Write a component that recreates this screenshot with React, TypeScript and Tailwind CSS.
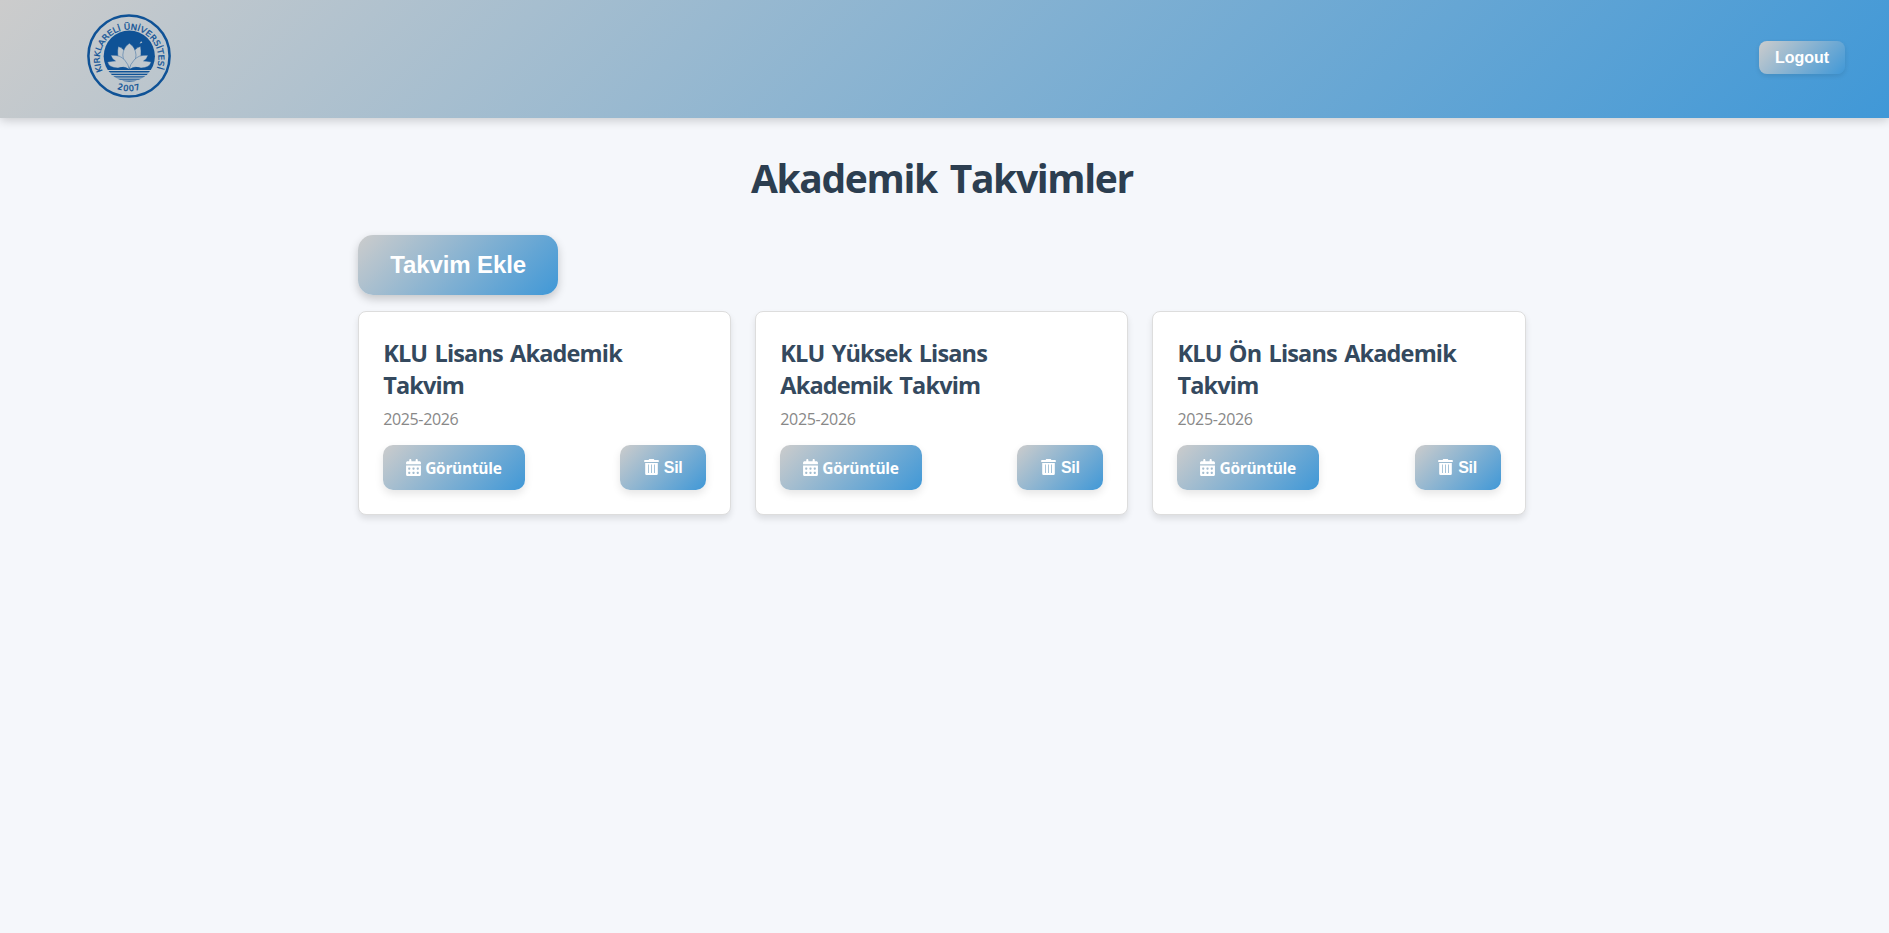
import React from "react";
import { FaCalendarDays } from "react-icons/fa6";

const GRADIENT = "bg-[linear-gradient(135deg,#cccccc,#4098d7)]";

function TrashIcon() {
  return (
    <svg width="15" height="16" viewBox="0 0 15 16" fill="currentColor" className="block">
      <path
        fillRule="evenodd"
        d="M.8 1H4.600L5.200 0H9.800L10.400 1H14.200A.6.6 0 0 1 14.800 1.600V3H.2V1.600A.6.6 0 0 1 .8 1ZM1.200 4H13.800V14.700A1.300 1.300 0 0 1 12.500 16H2.500A1.300 1.300 0 0 1 1.200 14.700ZM4 5.500V14H4.800V5.500ZM7.100 5.500V14H7.900V5.500ZM10.200 5.500V14H11V5.500Z"
      />
    </svg>
  );
}

function Logo() {
  return (
    <svg width="84" height="84" viewBox="0 0 84 84" className="block">
      <defs>
        <path id="arc-top" d="M15.700 57.200A29.200 29.200 0 1 1 69 56.200" />
        <path id="arc-bottom" d="M20 69.300A35 35 0 0 0 64 69.300" />
        <clipPath id="disc">
          <circle cx="42.300" cy="42.200" r="25.600" />
        </clipPath>
      </defs>
      <circle cx="42" cy="42" r="40.600" fill="none" stroke="#0f5296" strokeWidth="2.500" />
      <g clipPath="url(#disc)" fill="#0f5296">
        <rect x="16" y="16" width="53" height="40" />
        <rect x="16" y="57" width="53" height="1.500" />
        <rect x="16" y="59.700" width="53" height="1.400" />
        <rect x="16" y="62.300" width="53" height="1.200" />
        <rect x="16" y="64.700" width="53" height="1" />
        <rect x="35.500" y="66.600" width="14" height="1.300" />
      </g>
      <g fill="#c0c8ce" stroke="#0f5296" strokeWidth=".4">
        <path d="M31.200 32.500Q37 34 40 41L42 54Q32 50 30.800 42Q30.300 37 31.200 32.500Z" />
        <path d="M53.500 32.500Q47.500 34 45 41L42.600 54Q53 50 53.900 42Q54.300 37 53.500 32.500Z" />
        <path d="M42.400 29.300Q48.500 33.500 49 41Q49 48 42.400 54.300Q36 48 35.800 41Q36.200 33.500 42.400 29.300Z" />
        <path d="M23.800 41.300Q33.500 40.500 38 46.500Q41.500 50.500 42.300 55.200Q37 51.700 31 54Q22 53.800 20.500 48Q26 47 28.500 47Q25 45 23.800 41.300Z" />
        <path d="M61 41.300Q51 40.500 46.800 46.500Q43 50.500 42.300 55.200Q48 51.700 54 54Q62.500 53.800 64.200 48Q59 47 56.500 47Q60 45 61 41.300Z" />
      </g>
      <path d="M52.600 29.400L53.500 28.200L54.200 27L54.600 28L55.400 28.300L54.500 28.900L53.700 29.200Z" fill="#c0c8ce" />
      <g fill="#0f5296" fontFamily="'DejaVu Sans', sans-serif" stroke="#0f5296" strokeWidth=".25">
        <text fontSize="8.100">
          <textPath href="#arc-top" startOffset="0" textLength="114" lengthAdjust="spacingAndGlyphs">
            KIRKLARELİ ÜNİVERSİTESİ
          </textPath>
        </text>
        <text fontSize="8.200" textAnchor="middle" letterSpacing=".9" strokeWidth=".3">
          <textPath href="#arc-bottom" startOffset="50%">
            2007
          </textPath>
        </text>
      </g>
    </svg>
  );
}

const calendars = [
  { lines: ["KLU Lisans Akademik", "Takvim"], year: "2025-2026" },
  { lines: ["KLU Yüksek Lisans", "Akademik Takvim"], year: "2025-2026" },
  { lines: ["KLU Ön Lisans Akademik", "Takvim"], year: "2025-2026" },
];

export default function App() {
  return (
    <div className="min-h-screen bg-[#f5f7fb] font-['Open_Sans','Noto_Sans',sans-serif]">
      <header className={`flex h-[118px] items-start justify-between pl-[87px] pr-11 shadow-[0_2px_10px_rgba(0,0,0,0.2)] ${GRADIENT}`}>
        <div className="pt-[14px]">
          <Logo />
        </div>
        <button className={`mt-[41px] h-[33px] w-[86px] rounded-lg font-['Liberation_Sans',Arial,sans-serif] text-base font-bold text-white shadow-[0_2px_5px_rgba(0,0,0,0.1)] ${GRADIENT}`}>
          Logout
        </button>
      </header>
      <main className="pr-[5.2px]">
        <div className="mx-auto w-[1167.5px]">
          <h1 className="pt-8 text-center text-[39px] font-bold leading-[56px] tracking-[-1.35px] text-[#2c3e50] [word-spacing:4px]">Akademik Takvimler</h1>
          <button className={`mt-[29px] block h-[60px] w-[200px] rounded-[15px] font-['Liberation_Sans',Arial,sans-serif] text-2xl font-bold tracking-[-0.1px] text-white shadow-[0_4px_10px_rgba(0,0,0,0.2)] ${GRADIENT}`}>
            Takvim Ekle
          </button>
          <div className="mt-4 grid grid-cols-3 gap-6">
            {calendars.map((c) => (
              <section key={c.lines.join(" ")} className="h-[204px] rounded-lg border border-[#dddddd] bg-white px-6 pt-[25px] shadow-[0_4px_6px_rgba(0,0,0,0.1)]">
                <h2 className="text-[23.5px] font-bold leading-8 tracking-[-0.85px] text-[#34495e] [word-spacing:2px]">
                  {c.lines.map((l) => (
                    <span key={l} className="block whitespace-nowrap">{l}</span>
                  ))}
                </h2>
                <p className="mt-[6px] text-base leading-6 tracking-[-0.35px] text-[#888888]">{c.year}</p>
                <div className="mt-[14px] flex justify-between text-white">
                  <button className={`flex h-[45px] w-[142px] items-center gap-[3px] rounded-[10px] pl-[22px] text-[15.5px] font-bold tracking-[-0.3px] shadow-[0_4px_8px_rgba(0,0,0,0.1)] ${GRADIENT}`}>
                    <FaCalendarDays size={17} />
                    <span className="pt-[2px]">Görüntüle</span>
                  </button>
                  <button className={`flex h-[45px] w-[86px] items-center gap-[5px] rounded-[10px] pb-px pl-[23.5px] font-['Liberation_Sans',Arial,sans-serif] text-base font-bold tracking-[-0.3px] shadow-[0_4px_8px_rgba(0,0,0,0.1)] ${GRADIENT}`}>
                    <TrashIcon />
                    <span className="pt-px">Sil</span>
                  </button>
                </div>
              </section>
            ))}
          </div>
        </div>
      </main>
    </div>
  );
}
